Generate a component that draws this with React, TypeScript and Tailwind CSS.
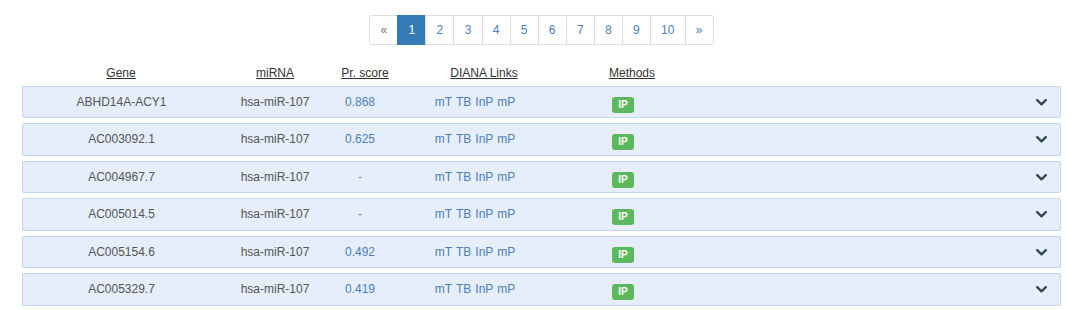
const rows = [
  { gene: "ABHD14A-ACY1", mirna: "hsa-miR-107", score: "0.868" },
  { gene: "AC003092.1", mirna: "hsa-miR-107", score: "0.625" },
  { gene: "AC004967.7", mirna: "hsa-miR-107", score: "-" },
  { gene: "AC005014.5", mirna: "hsa-miR-107", score: "-" },
  { gene: "AC005154.6", mirna: "hsa-miR-107", score: "0.492" },
  { gene: "AC005329.7", mirna: "hsa-miR-107", score: "0.419" },
];

const pages = ["1", "2", "3", "4", "5", "6", "7", "8", "9", "10"];

function Pager() {
  return (
    <div className="flex justify-center pt-[15px] pl-[3px]">
      <ul className="flex text-[12px] leading-[18px]">
        <li className="rounded-l-[3px] border border-[#ddd] bg-white px-[10.2px] py-[5px] text-[#777]">«</li>
        {pages.map((p) => (
          <li
            key={p}
            className={
              p === "1"
                ? "-ml-px border border-[#337ab7] bg-[#337ab7] px-[10.2px] py-[5px] text-white"
                : "-ml-px border border-[#ddd] bg-white px-[10.2px] py-[5px] text-[#4a80ba]"
            }
          >
            {p}
          </li>
        ))}
        <li className="-ml-px rounded-r-[3px] border border-[#ddd] bg-white px-[10.2px] py-[5px] text-[#4a80ba]">»</li>
      </ul>
    </div>
  );
}

function Chevron() {
  return (
    <svg width="11" height="7" viewBox="0 0 11 7" aria-hidden>
      <path d="M1.2 1.2 L5.5 5.3 L9.8 1.2" fill="none" stroke="#34495e" strokeWidth="2.4" strokeLinecap="round" strokeLinejoin="round" />
    </svg>
  );
}

export default function App() {
  return (
    <div
      className="h-[310px] w-[1080px] overflow-hidden bg-white text-[12px] text-[#555]"
      style={{ fontFamily: '"Liberation Sans", Arial, sans-serif' }}
    >
      <Pager />

      {/* column headings */}
      <div className="mt-[20px] ml-[22px] flex leading-[17px] text-[#333]">
        <div className="w-[198px] text-center underline">Gene</div>
        <div className="w-[110px] text-center underline">miRNA</div>
        <div className="w-[70px] text-center underline">Pr. score</div>
        <div className="w-[168px] text-center underline">DIANA Links</div>
        <div className="w-[128px] text-center underline">Methods</div>
      </div>

      <div className="mt-[3.5px] ml-[22px] w-[1039px]">
        {rows.map((r) => (
          <div
            key={r.gene}
            className="mb-[5px] flex h-[32.5px] items-center rounded-[2px] border border-[#c3d6f0] bg-[#e5eefa]"
          >
            <div className="w-[197px] text-center">{r.gene}</div>
            <div className="w-[110px] text-center">{r.mirna}</div>
            <div className={r.score === "-" ? "w-[60px] text-center text-[#888]" : "w-[60px] text-center text-[#4a80ba]"}>
              {r.score}
            </div>
            <div className="flex w-[170px] justify-center gap-[4px] text-[#4a80ba]">
              <span>mT</span>
              <span>TB</span>
              <span>InP</span>
              <span>mP</span>
            </div>
            <div className="w-[126px] pt-[4px] text-center">
              <span className="inline-block rounded-[3px] bg-[#5cb85c] px-[6px] text-[10px] leading-[16px] font-bold text-white">
                IP
              </span>
            </div>
            <div className="ml-auto mr-[13px] flex pt-[1px]">
              <Chevron />
            </div>
          </div>
        ))}
      </div>
    </div>
  );
}
